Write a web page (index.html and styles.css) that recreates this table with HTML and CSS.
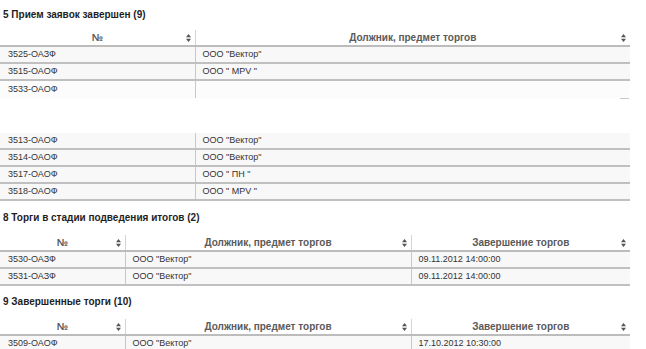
FILE: index.html
```
<!DOCTYPE html>
<html lang="ru">
<head>
<meta charset="utf-8">
<link rel="stylesheet" href="styles.css">
</head>
<body>
<h3 class="sec sec-first">5 Прием заявок завершен (9)</h3>
<table class="grid t1">
  <colgroup><col class="c-num1"><col></colgroup>
  <thead>
    <tr>
      <th><div class="th-in"><span></span><span>№</span><svg class="sort" width="5" height="8" viewBox="0 0 5 8"><path d="M2.5 0L5 3.3H0Z M2.5 8L5 4.7H0Z" fill="#555"/></svg></div></th>
      <th class="sep"><div class="th-in"><span></span><span>Должник, предмет торгов</span><svg class="sort" width="5" height="8" viewBox="0 0 5 8"><path d="M2.5 0L5 3.3H0Z M2.5 8L5 4.7H0Z" fill="#555"/></svg></div></th>
    </tr>
  </thead>
  <tbody>
    <tr><td>3525-ОАЗФ</td><td class="sep">ООО "Вектор"</td></tr>
    <tr><td>3515-ОАОФ</td><td class="sep">ООО " MPV "</td></tr>
    <tr class="noline"><td>3533-ОАОФ</td><td class="sep blank"></td></tr>
    <tr class="gap"><td colspan="2"><div class="gap-in"><span class="dash"></span></div></td></tr>
    <tr><td>3513-ОАОФ</td><td class="sep">ООО "Вектор"</td></tr>
    <tr><td>3514-ОАОФ</td><td class="sep">ООО "Вектор"</td></tr>
    <tr><td>3517-ОАОФ</td><td class="sep">ООО " ПН "</td></tr>
    <tr><td>3518-ОАОФ</td><td class="sep">ООО " MPV "</td></tr>
  </tbody>
</table>

<h3 class="sec sec-mid">8 Торги в стадии подведения итогов (2)</h3>
<table class="grid">
  <colgroup><col class="c-num"><col class="c-name"><col></colgroup>
  <thead>
    <tr>
      <th><div class="th-in"><span></span><span>№</span><svg class="sort" width="5" height="8" viewBox="0 0 5 8"><path d="M2.5 0L5 3.3H0Z M2.5 8L5 4.7H0Z" fill="#555"/></svg></div></th>
      <th class="sep"><div class="th-in"><span></span><span>Должник, предмет торгов</span><svg class="sort" width="5" height="8" viewBox="0 0 5 8"><path d="M2.5 0L5 3.3H0Z M2.5 8L5 4.7H0Z" fill="#555"/></svg></div></th>
      <th class="sep"><div class="th-in"><span></span><span>Завершение торгов</span><svg class="sort" width="5" height="8" viewBox="0 0 5 8"><path d="M2.5 0L5 3.3H0Z M2.5 8L5 4.7H0Z" fill="#555"/></svg></div></th>
    </tr>
  </thead>
  <tbody>
    <tr><td>3530-ОАЗФ</td><td class="sep">ООО "Вектор"</td><td class="sep">09.11.2012 14:00:00</td></tr>
    <tr><td>3531-ОАЗФ</td><td class="sep">ООО "Вектор"</td><td class="sep">09.11.2012 14:00:00</td></tr>
  </tbody>
</table>

<h3 class="sec sec-last">9 Завершенные торги (10)</h3>
<table class="grid">
  <colgroup><col class="c-num"><col class="c-name"><col></colgroup>
  <thead>
    <tr>
      <th><div class="th-in"><span></span><span>№</span><svg class="sort" width="5" height="8" viewBox="0 0 5 8"><path d="M2.5 0L5 3.3H0Z M2.5 8L5 4.7H0Z" fill="#555"/></svg></div></th>
      <th class="sep"><div class="th-in"><span></span><span>Должник, предмет торгов</span><svg class="sort" width="5" height="8" viewBox="0 0 5 8"><path d="M2.5 0L5 3.3H0Z M2.5 8L5 4.7H0Z" fill="#555"/></svg></div></th>
      <th class="sep"><div class="th-in"><span></span><span>Завершение торгов</span><svg class="sort" width="5" height="8" viewBox="0 0 5 8"><path d="M2.5 0L5 3.3H0Z M2.5 8L5 4.7H0Z" fill="#555"/></svg></div></th>
    </tr>
  </thead>
  <tbody>
    <tr><td>3509-ОАОФ</td><td class="sep">ООО "Вектор"</td><td class="sep">17.10.2012 10:30:00</td></tr>
  </tbody>
</table>
</body>
</html>
```
FILE: styles.css
```
html, body {
  margin: 0;
  padding: 0;
  background: #fff;
}
body {
  font-family: "Liberation Sans", Arial, sans-serif;
  font-size: 9px;
  color: #333;
  overflow: hidden;
}
.sec {
  margin: 0;
  padding-left: 3px;
  font-size: 10px;
  font-weight: bold;
  color: #1e1e1e;
}
.sec-first { height: 30px; line-height: 30px; }
.sec-mid { height: 34px; line-height: 34px; }
.sec-last { height: 33px; line-height: 31px; }

.grid {
  width: 630px;
  border-collapse: collapse;
  table-layout: fixed;
}
.c-num1 { width: 195px; }
.c-num { width: 125px; }
.c-name { width: 286px; }

.grid th {
  height: 15px;
  padding: 0;
  font-size: 10px;
  font-weight: bold;
  color: #5a5a5a;
  border-bottom: 2px solid #bcbcbc;
  background: #fff;
}
.th-in {
  display: grid;
  grid-template-columns: 9px 1fr 9px;
  align-items: center;
}
.th-in .sort { justify-self: start; }
.grid th.sep { border-left: 1px solid #d4d4d4; }

.grid td {
  height: 15px;
  padding: 0 0 0 8px;
  line-height: 15px;
  background: #f8f8f8;
  border-bottom: 2px solid #c0c0c0;
  white-space: nowrap;
  overflow: hidden;
}
.grid td.sep {
  border-left: 1px solid #c8c8c8;
  padding-left: 7px;
}
.grid tr.noline td { border-bottom: 0; height: 17px; background: #fcfcfc; }
.grid td.blank { background: #fff; }
.grid tr.gap td {
  height: 35px;
  padding: 0;
  background: #fff;
  border-bottom: 0;
}
.gap-in {
  display: flex;
  justify-content: flex-end;
  align-items: flex-start;
  height: 35px;
}
.dash {
  width: 9px;
  height: 1px;
  margin-right: 1px;
  background: #c8c8c8;
}
```
